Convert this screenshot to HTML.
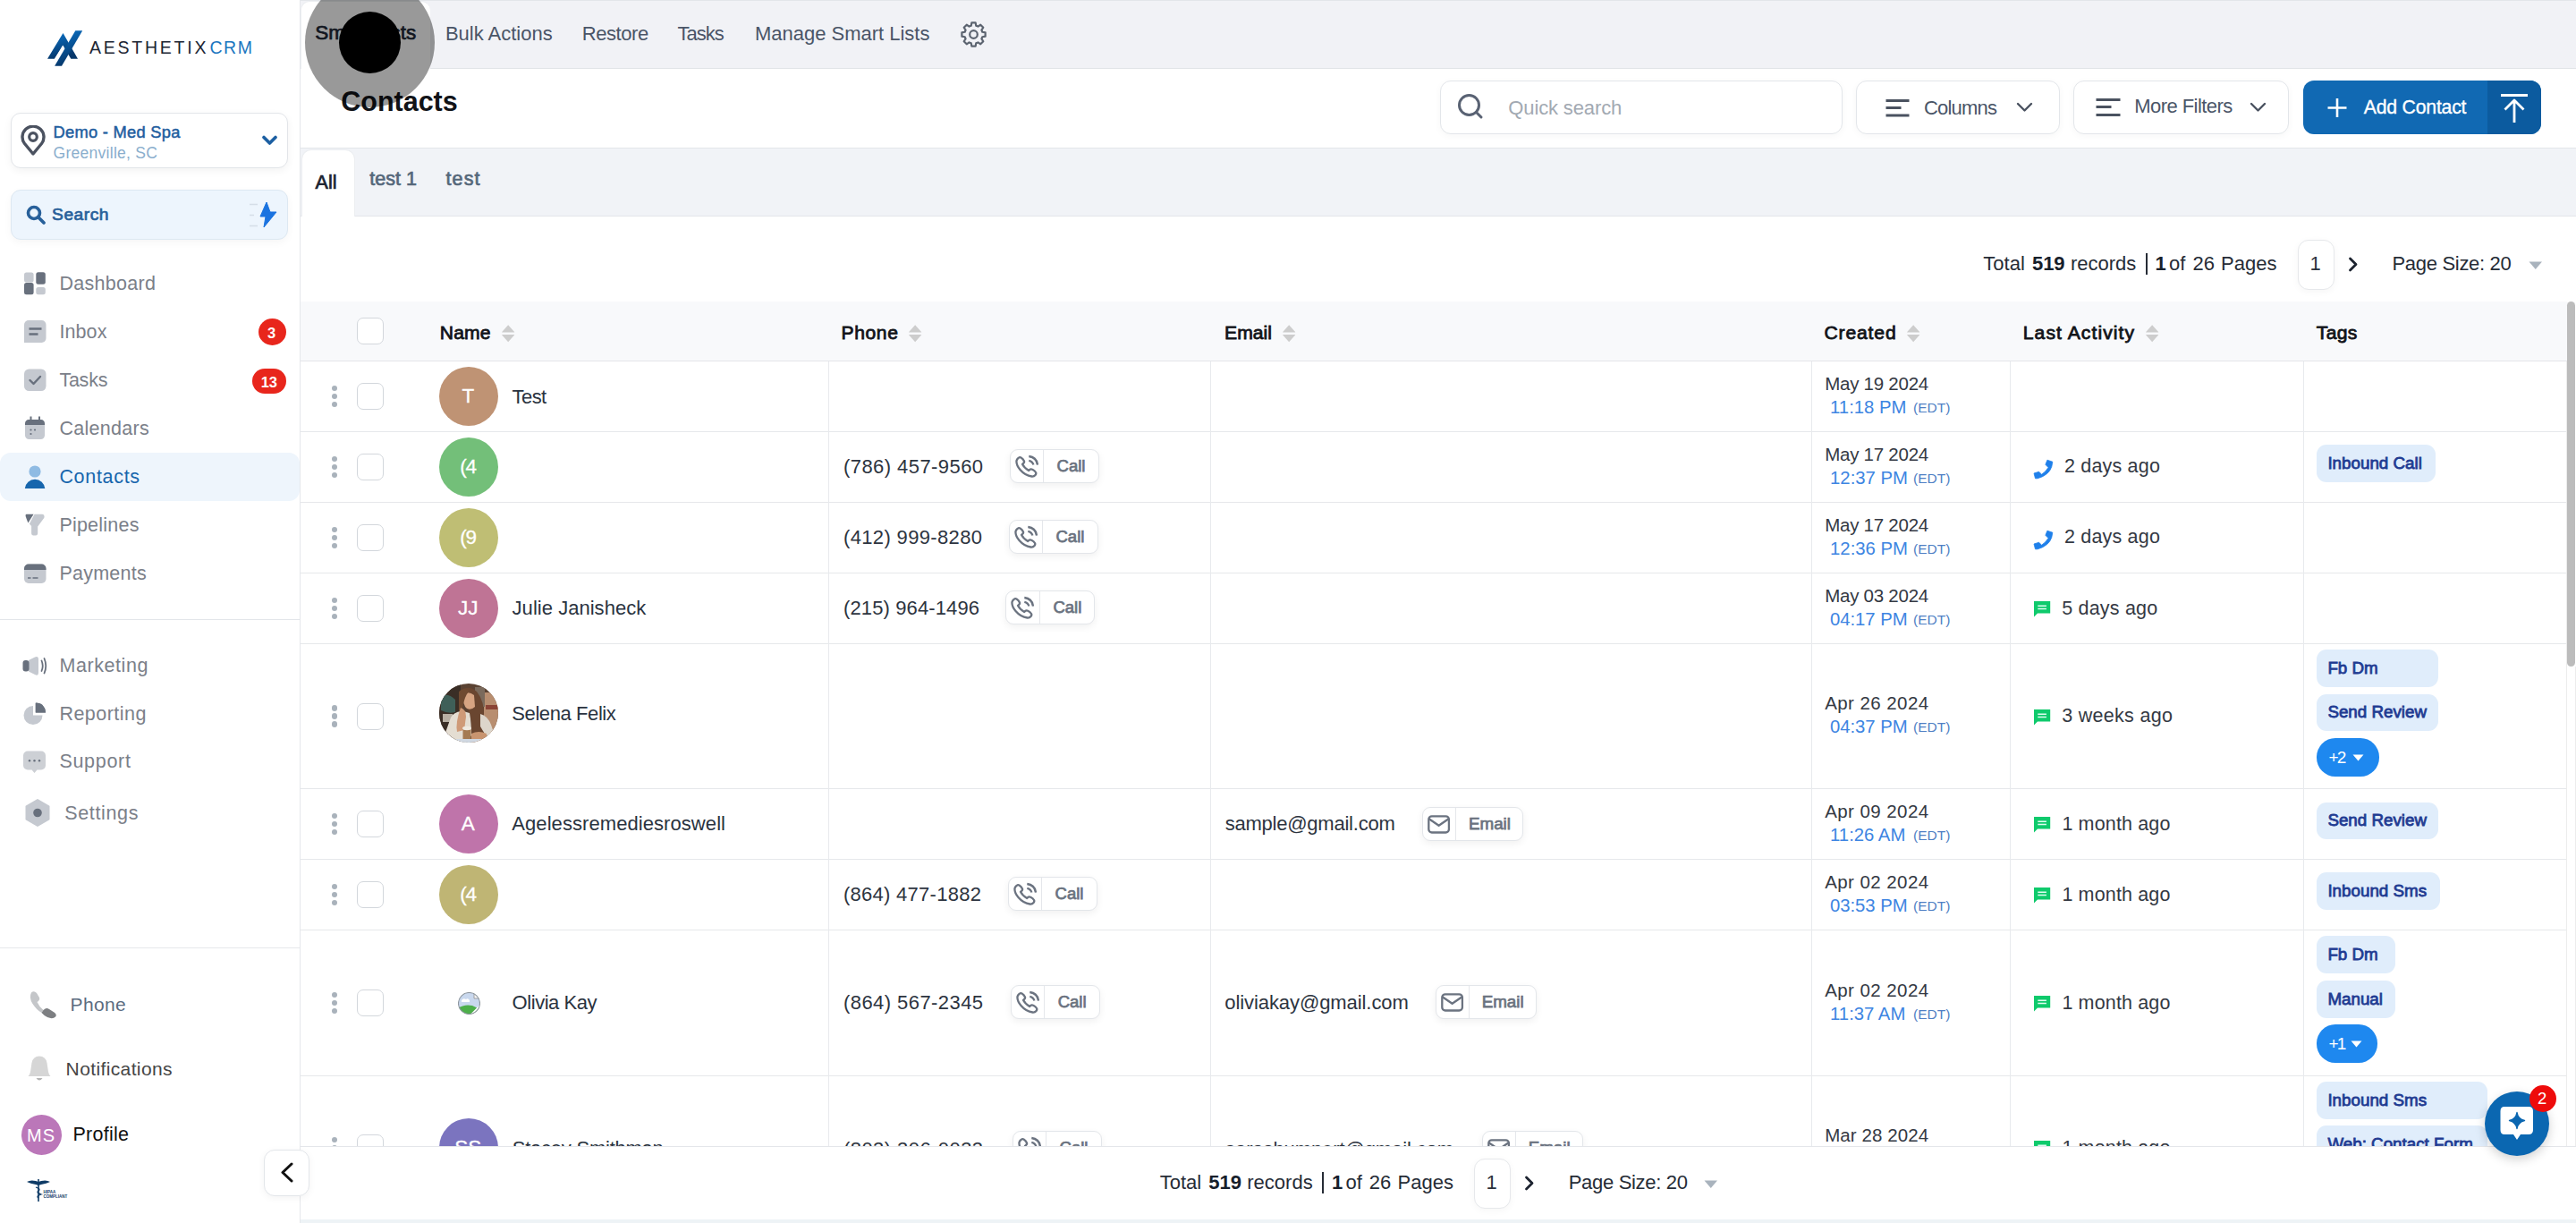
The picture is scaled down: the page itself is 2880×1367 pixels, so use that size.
<!DOCTYPE html><html><head><meta charset="utf-8"><style>
html,body{margin:0;padding:0;width:2880px;height:1367px;overflow:hidden;background:#fff;font-family:'Liberation Sans',sans-serif;}
.a{position:absolute;box-sizing:border-box;}
.t{position:absolute;line-height:0;white-space:nowrap;}
</style></head><body>

<div class="a" style="left:335.0px;top:0.0px;width:1.0px;height:1367.0px;background:#e5e7eb"></div>
<svg class="a" style="left:50.0px;top:32.0px;" width="46.0" height="45.0" viewBox="0 0 46 45"><defs><linearGradient id="lg" x1="0" y1="0" x2="0.3" y2="1"><stop offset="0" stop-color="#0a72c8"/><stop offset="1" stop-color="#06376a"/></linearGradient></defs>
<path fill="url(#lg)" fill-rule="evenodd" d="M3,33.7 L20.5,4.9 L37,33.7 L29.3,33.7 L20.6,18.9 L10.9,33.7 Z"/>
<path fill="url(#lg)" d="M34.3,2.2 L42.2,2.2 L19,41.8 L11.1,41.8 Z"/><path d="M20.6,19 L10.4,36" stroke="#fff" stroke-width="1.3"/></svg>
<div class="t" style="left:99.9px;top:52.7px;font-size:19.5px;color:#1c2533;letter-spacing:2.77px;">AESTHETIX</div>
<div class="t" style="left:234.4px;top:52.7px;font-size:19.5px;color:#1b76c0;letter-spacing:1.55px;">CRM</div>
<div class="a" style="left:12.0px;top:126.0px;width:310.0px;height:62.0px;border:1px solid #e2e5e9;border-radius:11px;background:#fff;box-shadow:0 3px 10px rgba(0,0,0,0.05)"></div>
<svg class="a" style="left:23.0px;top:140.0px;" width="28.0" height="34.0" viewBox="0 0 28 34"><path d="M14,32 L4.5,20.5 A12,12 0 1 1 23.5,20.5 Z" fill="none" stroke="#4b5260" stroke-width="3.4" stroke-linejoin="round"/><circle cx="14" cy="13" r="4.3" fill="none" stroke="#4b5260" stroke-width="3.2"/></svg>
<div class="t" style="left:59.5px;top:147.7px;font-size:18.3px;color:#1f5e9f;-webkit-text-stroke:0.50px #1f5e9f;letter-spacing:0.28px;">Demo - Med Spa</div>
<div class="t" style="left:59.5px;top:170.5px;font-size:17.5px;color:#8aaecd;letter-spacing:0.28px;">Greenville, SC</div>
<svg class="a" style="left:293.0px;top:151.0px;" width="17.0" height="12.0" viewBox="0 0 17 12"><path d="M2,2.5 L8.5,9 L15,2.5" fill="none" stroke="#1c5fa2" stroke-width="3.6" stroke-linecap="round" stroke-linejoin="round"/></svg>
<div class="a" style="left:12.0px;top:212.0px;width:310.0px;height:56.0px;border:1px solid #dde8f2;border-radius:11px;background:#edf5fd;box-shadow:0 3px 10px rgba(0,0,0,0.04)"></div>
<svg class="a" style="left:29.0px;top:229.0px;" width="23.0" height="23.0" viewBox="0 0 23 23"><circle cx="9" cy="9" r="6.5" fill="none" stroke="#28609a" stroke-width="3.6"/><path d="M14,14 L20,20" stroke="#28609a" stroke-width="3.8" stroke-linecap="round"/></svg>
<div class="t" style="left:58.1px;top:240.1px;font-size:19.2px;color:#28609a;-webkit-text-stroke:0.70px #28609a;letter-spacing:0.53px;">Search</div>
<svg class="a" style="left:278.0px;top:225.0px;" width="34.0" height="31.0" viewBox="0 0 34 31"><path d="M1,3.5h9M1,15.5h5M1,27.5h9" stroke="#d5dee8" stroke-width="1.6"/><path d="M20,1 L13,17 L19,17 L17,29 L31,12 L24,12 Z" fill="#1a73e0" stroke="#1a73e0" stroke-width="1" stroke-linejoin="round"/></svg>
<div class="a" style="left:0.0px;top:506.0px;width:335.0px;height:54.0px;background:#eef5fc;border-radius:12px"></div>
<div class="t" style="left:66.4px;top:316.6px;font-size:21.5px;color:#7b8089;letter-spacing:0.29px;">Dashboard</div>
<div class="t" style="left:66.4px;top:370.6px;font-size:21.5px;color:#7b8089;letter-spacing:0.10px;">Inbox</div>
<div class="t" style="left:66.4px;top:424.6px;font-size:21.5px;color:#7b8089;letter-spacing:-0.24px;">Tasks</div>
<div class="t" style="left:66.4px;top:478.6px;font-size:21.5px;color:#7b8089;letter-spacing:0.30px;">Calendars</div>
<div class="t" style="left:66.4px;top:532.6px;font-size:21.5px;color:#1766ad;letter-spacing:0.69px;">Contacts</div>
<div class="t" style="left:66.4px;top:586.6px;font-size:21.5px;color:#7b8089;letter-spacing:0.22px;">Pipelines</div>
<div class="t" style="left:66.4px;top:640.6px;font-size:21.5px;color:#7b8089;letter-spacing:0.24px;">Payments</div>
<svg class="a" style="left:27.0px;top:304.0px;" width="24.0" height="26.0" viewBox="0 0 24 26"><rect x="0" y="0.5" width="10.6" height="11" rx="2.5" fill="#c5c9d0"/><rect x="13.3" y="0.3" width="10.5" height="13.4" rx="2.5" fill="#68707d"/><rect x="0" y="12" width="10.6" height="13.3" rx="2.5" fill="#68707d"/><rect x="13.3" y="17" width="10.5" height="8.3" rx="2.5" fill="#c5c9d0"/></svg>
<svg class="a" style="left:27.0px;top:358.0px;" width="25.0" height="26.0" viewBox="0 0 25 26"><path d="M0,25 L0,5 A5,5 0 0 1 5,0 L19.5,0 A5,5 0 0 1 24.5,5 L24.5,20 A5,5 0 0 1 19.5,25 Z" fill="#c5c9d0"/><path d="M5.5,9.5h14M5.5,15.5h10" stroke="#68707d" stroke-width="2.4"/></svg>
<svg class="a" style="left:27.0px;top:412.0px;" width="25.0" height="26.0" viewBox="0 0 25 26"><rect x="0" y="0.5" width="24.5" height="24.5" rx="5.5" fill="#c5c9d0"/><path d="M6.5,13 L10.5,17 L18,9" fill="none" stroke="#68707d" stroke-width="2.4" stroke-linecap="round" stroke-linejoin="round"/></svg>
<svg class="a" style="left:28.0px;top:465.0px;" width="23.0" height="27.0" viewBox="0 0 23 27"><rect x="0" y="4" width="22" height="22" rx="4.5" fill="#c5c9d0"/><path d="M0,14 L0,8.5 A4.5,4.5 0 0 1 4.5,4 L17.5,4 A4.5,4.5 0 0 1 22,8.5 L22,10 L0,10 Z" fill="#68707d"/><rect x="5.5" y="0.5" width="2" height="6" fill="#68707d"/><rect x="15" y="0.5" width="2" height="6" fill="#68707d"/><circle cx="6.5" cy="15.5" r="1.1" fill="#68707d"/><circle cx="11" cy="15.5" r="1.1" fill="#68707d"/><circle cx="6.5" cy="20" r="1.1" fill="#68707d"/></svg>
<svg class="a" style="left:27.0px;top:520.0px;" width="24.0" height="27.0" viewBox="0 0 24 27"><circle cx="12" cy="7" r="6.6" fill="#8fbbe3"/><path d="M0.8,26 A11.3,11.3 0 0 1 23.3,26 Z" fill="#1766ad"/></svg>
<svg class="a" style="left:28.0px;top:574.0px;" width="23.0" height="26.0" viewBox="0 0 23 26"><path d="M1.5,0.7 L9.6,0.7 L3.4,10.5 L0.6,3 Q0.3,0.7 1.5,0.7 Z" fill="#68707d"/><path d="M10.6,0.7 L19,0.7 Q22.3,1 21.4,4.8 L14.2,14.6 L14.2,22 Q14.2,24.6 10.6,24.6 Q7.1,24.6 7.1,22 L7.1,14 L4.9,11.5 Z" fill="#c5c9d0"/></svg>
<svg class="a" style="left:27.0px;top:630.0px;" width="25.0" height="23.0" viewBox="0 0 25 23"><rect x="0" y="0.5" width="24.5" height="21.5" rx="5" fill="#c5c9d0"/><path d="M0,7 L0,5.5 A5,5 0 0 1 5,0.5 L19.5,0.5 A5,5 0 0 1 24.5,5.5 L24.5,7 Z" fill="#68707d"/><path d="M4,16h3.5M9.5,16h6" stroke="#68707d" stroke-width="1.6"/></svg>
<div class="a" style="left:0.0px;top:692.0px;width:335.0px;height:1.0px;background:#e3e6ea"></div>
<div class="t" style="left:66.4px;top:743.8px;font-size:21.5px;color:#7b8089;letter-spacing:0.58px;">Marketing</div>
<div class="t" style="left:66.4px;top:797.6px;font-size:21.5px;color:#7b8089;letter-spacing:0.47px;">Reporting</div>
<div class="t" style="left:66.4px;top:851.3px;font-size:21.5px;color:#7b8089;letter-spacing:0.70px;">Support</div>
<div class="t" style="left:72.3px;top:908.5px;font-size:21.5px;color:#7b8089;letter-spacing:0.64px;">Settings</div>
<svg class="a" style="left:25.0px;top:733.0px;" width="28.0" height="23.0" viewBox="0 0 28 23"><path d="M7,5 L14,1.5 Q18,0 18,4 L18,19 Q18,23 14,21 L7,17.5 Z" fill="#c5c9d0"/><rect x="0.5" y="5" width="7" height="12.5" rx="3" fill="#68707d"/><path d="M21.5,5.5 Q24,11.3 21.5,17M24.5,3 Q28,11.3 24.5,19.5" fill="none" stroke="#68707d" stroke-width="1.8" stroke-linecap="round"/></svg>
<svg class="a" style="left:26.0px;top:785.0px;" width="26.0" height="26.0" viewBox="0 0 26 26"><path d="M11,4 A10.5,10.5 0 1 0 21.5,14.5 L11,14.5 Z" fill="#c5c9d0"/><path d="M14,0.5 A11,11 0 0 1 25,11.5 L14,11.5 Z" fill="#68707d"/><path d="M13.6,0.8 Q24,-0.5 25,11.5 L13.6,11.5 Z" fill="#68707d"/></svg>
<svg class="a" style="left:26.0px;top:839.0px;" width="26.0" height="26.0" viewBox="0 0 26 26"><path d="M5,0.5 L20,0.5 A5,5 0 0 1 25,5.5 L25,16.5 A5,5 0 0 1 20,21.5 L15.5,21.5 L12.5,25 L9.5,21.5 L5,21.5 A5,5 0 0 1 0,16.5 L0,5.5 A5,5 0 0 1 5,0.5 Z" fill="#cdd0d5"/><circle cx="7" cy="11.3" r="1.2" fill="#68707d"/><circle cx="12.5" cy="11.3" r="1.2" fill="#68707d"/><circle cx="18" cy="11.3" r="1.2" fill="#68707d"/></svg>
<svg class="a" style="left:27.0px;top:893.0px;" width="30.0" height="32.0" viewBox="0 0 30 32"><path d="M15,1 L27.5,8.3 L27.5,22.7 L15,30 L2.5,22.7 L2.5,8.3 Z" fill="#c5c9d0" stroke="#c5c9d0" stroke-width="2" stroke-linejoin="round"/><circle cx="15" cy="15.5" r="4.8" fill="#68707d"/></svg>
<div class="a" style="left:289.0px;top:356.0px;width:31.0px;height:30.0px;background:#e8261c;border-radius:50%"></div>
<div class="t" style="left:299.0px;top:371.8px;font-size:16.5px;color:#fff;font-weight:700;">3</div>
<div class="a" style="left:282.0px;top:412.0px;width:38.0px;height:28.0px;background:#e8261c;border-radius:14px"></div>
<div class="t" style="left:291.7px;top:426.8px;font-size:16.5px;color:#fff;font-weight:700;">13</div>
<div class="a" style="left:0.0px;top:1059.0px;width:335.0px;height:1.0px;background:#e6e8eb"></div>
<svg class="a" style="left:32.0px;top:1107.0px;" width="33.0" height="32.0" viewBox="0 0 33 32"><path d="M3,2.5 Q6,0 9,3 L12,8 Q13,10.5 11,12 L9.5,13 Q12,18.5 16.5,22 L14.5,25 Q9,22 4.5,15 Q0,8 3,2.5 Z" fill="#c4c6c9"/><path d="M14.5,25 L16.5,22 L18.5,20.5 Q20.5,19.5 23,21 L28.5,24.5 Q32,27 30,29.5 Q27,32.5 21,30 Q17.5,28.5 14.5,25 Z" fill="#7d7f82"/></svg>
<div class="t" style="left:78.6px;top:1122.5px;font-size:21.0px;color:#5b6b80;letter-spacing:0.32px;">Phone</div>
<svg class="a" style="left:31.0px;top:1179.0px;" width="26.0" height="32.0" viewBox="0 0 26 32"><path d="M13,1.5 Q20,1.5 21.5,9 L23,19 Q23.5,22 25.5,24 L0.5,24 Q2.5,22 3,19 L4.5,9 Q6,1.5 13,1.5 Z" fill="#d6d6d6"/><path d="M9.5,26 Q13,31 16.5,26 Z" fill="#b3b3b3"/></svg>
<div class="t" style="left:73.6px;top:1194.6px;font-size:21.0px;color:#454545;letter-spacing:0.38px;">Notifications</div>
<div class="a" style="left:24.0px;top:1246.0px;width:45.0px;height:45.0px;background:#bb77b9;border-radius:50%"></div>
<div class="t" style="left:30.0px;top:1268.6px;font-size:20.0px;color:#fff;letter-spacing:1.00px;">MS</div>
<div class="t" style="left:81.4px;top:1267.6px;font-size:21.5px;color:#111;letter-spacing:0.29px;">Profile</div>
<svg class="a" style="left:29.0px;top:1317.0px;" width="50.0" height="27.0" viewBox="0 0 50 27"><path d="M1,4 Q5,1.5 11,3 L14,4 L17,3 Q23,1.5 27,4 Q23,6 17,7 L14,8 L11,7 Q5,6 1,4 Z" fill="#0f3b66"/><path d="M14,1 L14,26" stroke="#0f3b66" stroke-width="1.6"/><path d="M11,10 Q17,12 14,14 Q11,16 17,18 Q11,20 14,22" fill="none" stroke="#0f3b66" stroke-width="1.3"/><text x="19.5" y="16.5" font-size="4.5" font-family="Liberation Sans" font-weight="700" fill="#0f3b66">HIPAA</text><text x="19.5" y="22" font-size="4.5" font-family="Liberation Sans" font-weight="700" fill="#0f3b66">COMPLIANT</text></svg>
<div class="a" style="left:336.0px;top:0.0px;width:2544.0px;height:77.0px;background:#f1f2f6;border-top:1px solid #e3e6ea;border-bottom:1px solid #e1e4e8"></div>
<div class="a" style="left:336.0px;top:1.0px;width:145.0px;height:76.0px;background:#fff;border:1px solid #eceef1;border-bottom:none;border-right:none;border-radius:10px 10px 0 0"></div>
<div class="t" style="left:352.3px;top:37.2px;font-size:22.5px;color:#1d2736;-webkit-text-stroke:0.70px #1d2736;letter-spacing:0.05px;">Smart Lists</div>
<div class="t" style="left:497.9px;top:37.6px;font-size:22.0px;color:#4a5567;letter-spacing:-0.00px;">Bulk Actions</div>
<div class="t" style="left:650.7px;top:37.6px;font-size:22.0px;color:#4a5567;letter-spacing:-0.41px;">Restore</div>
<div class="t" style="left:757.6px;top:37.6px;font-size:22.0px;color:#4a5567;letter-spacing:-0.99px;">Tasks</div>
<div class="t" style="left:844.0px;top:37.6px;font-size:22.0px;color:#4a5567;letter-spacing:-0.01px;">Manage Smart Lists</div>
<svg class="a" style="left:1073.0px;top:23.0px;" width="31.0" height="31.0" viewBox="0 0 31 31"><path d="M25.31,12.72 L28.62,13.34 L28.62,17.66 L25.31,18.28 L24.41,20.47 L26.31,23.25 L23.25,26.31 L20.47,24.41 L18.28,25.31 L17.66,28.62 L13.34,28.62 L12.72,25.31 L10.53,24.41 L7.75,26.31 L4.69,23.25 L6.59,20.47 L5.69,18.28 L2.38,17.66 L2.38,13.34 L5.69,12.72 L6.59,10.53 L4.69,7.75 L7.75,4.69 L10.53,6.59 L12.72,5.69 L13.34,2.38 L17.66,2.38 L18.28,5.69 L20.47,6.59 L23.25,4.69 L26.31,7.75 L24.41,10.53 Z" fill="none" stroke="#5c6470" stroke-width="2.2" stroke-linejoin="round"/><circle cx="15.5" cy="15.5" r="4.3" fill="none" stroke="#5c6470" stroke-width="2.2"/></svg>
<div class="a" style="left:336.0px;top:165.0px;width:2544.0px;height:1.0px;background:#e3e6ea"></div>
<div class="t" style="left:381.3px;top:112.5px;font-size:30.5px;color:#111318;font-weight:700;letter-spacing:-0.01px;">Contacts</div>
<div class="a" style="left:1610.0px;top:90.0px;width:450.0px;height:60.0px;border:1px solid #e3e6ea;border-radius:12px;background:#fff;box-shadow:0 2px 8px rgba(0,0,0,0.035)"></div>
<svg class="a" style="left:1629.0px;top:104.0px;" width="32.0" height="32.0" viewBox="0 0 32 32"><circle cx="13.5" cy="13.5" r="11" fill="none" stroke="#596273" stroke-width="3"/><path d="M21.5,21.5 L27,27" stroke="#596273" stroke-width="3" stroke-linecap="round"/></svg>
<div class="t" style="left:1686.3px;top:120.7px;font-size:22.0px;color:#a2a9b2;letter-spacing:-0.13px;">Quick search</div>
<div class="a" style="left:2075.0px;top:90.0px;width:228.0px;height:60.0px;border:1px solid #e3e6ea;border-radius:12px;background:#fff;box-shadow:0 2px 8px rgba(0,0,0,0.035)"></div>
<svg class="a" style="left:2107.0px;top:110.0px;" width="30.0" height="22.0" viewBox="0 0 30 22"><path d="M1.5,2.5h26M1.5,10.5h17M1.5,19h26" stroke="#4a5260" stroke-width="2.8"/></svg>
<div class="t" style="left:2150.9px;top:121.2px;font-size:22.0px;color:#4a5567;letter-spacing:-0.80px;">Columns</div>
<svg class="a" style="left:2254.0px;top:114.0px;" width="19.0" height="13.0" viewBox="0 0 19 13"><path d="M2,2 L9.5,9.5 L17,2" fill="none" stroke="#4a5260" stroke-width="2.4" stroke-linecap="round" stroke-linejoin="round"/></svg>
<div class="a" style="left:2318.0px;top:90.0px;width:241.0px;height:60.0px;border:1px solid #e3e6ea;border-radius:12px;background:#fff;box-shadow:0 2px 8px rgba(0,0,0,0.035)"></div>
<svg class="a" style="left:2342.0px;top:109.0px;" width="31.0" height="23.0" viewBox="0 0 31 23"><path d="M1.5,2.5h27M1.5,10.5h17M1.5,19.5h27" stroke="#4a5260" stroke-width="2.8"/></svg>
<div class="t" style="left:2386.3px;top:119.2px;font-size:22.0px;color:#4a5567;letter-spacing:-0.56px;">More Filters</div>
<svg class="a" style="left:2515.0px;top:114.0px;" width="19.0" height="13.0" viewBox="0 0 19 13"><path d="M2,2 L9.5,9.5 L17,2" fill="none" stroke="#4a5260" stroke-width="2.4" stroke-linecap="round" stroke-linejoin="round"/></svg>
<div class="a" style="left:2575.0px;top:90.0px;width:266.0px;height:60.0px;background:#1169b3;border-radius:12px;overflow:hidden"></div>
<div class="a" style="left:2781.0px;top:90.0px;width:60.0px;height:60.0px;background:#0c5b9f;border-radius:0 12px 12px 0"></div>
<svg class="a" style="left:2601.0px;top:109.0px;" width="24.0" height="23.0" viewBox="0 0 24 23"><path d="M12,1v21M1.5,11.5h21" stroke="#fff" stroke-width="2.6"/></svg>
<div class="t" style="left:2642.8px;top:119.5px;font-size:21.2px;color:#fff;-webkit-text-stroke:0.35px #fff;letter-spacing:-0.19px;">Add Contact</div>
<svg class="a" style="left:2794.0px;top:103.0px;" width="34.0" height="34.0" viewBox="0 0 34 34"><path d="M2,3.5h30M17,9v25M6.5,19.5 L17,9 L27.5,19.5" fill="none" stroke="#fff" stroke-width="2.8" stroke-linejoin="round"/></svg>
<div class="a" style="left:336.0px;top:166.0px;width:2544.0px;height:76.0px;background:#f1f3f7;border-bottom:1px solid #e3e6ea"></div>
<div class="a" style="left:337.0px;top:167.0px;width:60.0px;height:75.0px;background:#fff;border-radius:11px 11px 0 0;border:1px solid #eceef1;border-bottom:none"></div>
<div class="t" style="left:352.4px;top:203.5px;font-size:21.5px;color:#1b2330;-webkit-text-stroke:0.70px #1b2330;letter-spacing:0.15px;">All</div>
<div class="t" style="left:413.3px;top:200.4px;font-size:21.5px;color:#55677a;-webkit-text-stroke:0.70px #55677a;letter-spacing:0.02px;">test 1</div>
<div class="t" style="left:498.4px;top:200.4px;font-size:21.5px;color:#55677a;-webkit-text-stroke:0.70px #55677a;letter-spacing:1.18px;">test</div>
<div class="t" style="left:2217.3px;top:295.2px;font-size:22.0px;color:#262c36;">Total</div>
<div class="t" style="left:2271.9px;top:295.2px;font-size:22.0px;color:#17202b;font-weight:700;">519</div>
<div class="t" style="left:2314.9px;top:295.2px;font-size:22.0px;color:#262c36;">records</div>
<div class="t" style="left:2409.5px;top:295.2px;font-size:22.0px;color:#17202b;font-weight:700;">1</div>
<div class="t" style="left:2425.0px;top:295.2px;font-size:22.0px;color:#262c36;">of</div>
<div class="t" style="left:2451.4px;top:295.2px;font-size:22.0px;color:#262c36;">26</div>
<div class="t" style="left:2483.1px;top:295.2px;font-size:22.0px;color:#262c36;">Pages</div>
<div class="a" style="left:2398.5px;top:283.2px;width:2.0px;height:24.3px;background:#262c36"></div>
<div class="a" style="left:2568.5px;top:267.5px;width:41.0px;height:56.0px;border:1px solid #e6e8eb;border-radius:12px;background:#fff;box-shadow:0 2px 8px rgba(0,0,0,0.04)"></div>
<div class="t" style="left:2582.6px;top:295.2px;font-size:22.0px;color:#2b313b;">1</div>
<svg class="a" style="left:2624.5px;top:287.3px;" width="12.0" height="18.0" viewBox="0 0 12 18"><path d="M2.5,2 L9,8.5 L2.5,15" fill="none" stroke="#1d2430" stroke-width="2.8" stroke-linecap="round" stroke-linejoin="round"/></svg>
<div class="t" style="left:2674.5px;top:295.2px;font-size:22.0px;color:#262c36;letter-spacing:-0.31px;">Page Size: 20</div>
<svg class="a" style="left:2826.5px;top:291.8px;" width="16.0" height="10.0" viewBox="0 0 16 10"><path d="M0.5,0.5 L15,0.5 L7.75,9 Z" fill="#a9b3bd"/></svg>
<div class="a" style="left:336.0px;top:337.0px;width:2534.0px;height:67.0px;background:#f8f9fb;border-bottom:1px solid #e4e6ea"></div>
<div class="a" style="left:399.0px;top:355.0px;width:30.0px;height:30.0px;border:1.5px solid #d3d7dc;border-radius:7px;background:#fff"></div>
<div class="t" style="left:491.8px;top:371.5px;font-size:21.1px;color:#111318;-webkit-text-stroke:0.80px #111318;letter-spacing:0.14px;">Name</div>
<svg class="a" style="left:559.7px;top:362.3px;" width="16.3" height="21.5" viewBox="0 0 16.3 21.5"><path d="M1.2,9 L8.15,1.3 L15.1,9 Q15.5,9.6 14.7,9.6 L1.6,9.6 Q0.8,9.6 1.2,9 Z M1.6,12 L14.7,12 Q15.5,12 15.1,12.6 L8.15,20.3 L1.2,12.6 Q0.8,12 1.6,12 Z" fill="#cdcdcd"/></svg>
<div class="t" style="left:940.5px;top:371.5px;font-size:21.1px;color:#111318;-webkit-text-stroke:0.80px #111318;letter-spacing:0.60px;">Phone</div>
<svg class="a" style="left:1014.7px;top:362.3px;" width="16.3" height="21.5" viewBox="0 0 16.3 21.5"><path d="M1.2,9 L8.15,1.3 L15.1,9 Q15.5,9.6 14.7,9.6 L1.6,9.6 Q0.8,9.6 1.2,9 Z M1.6,12 L14.7,12 Q15.5,12 15.1,12.6 L8.15,20.3 L1.2,12.6 Q0.8,12 1.6,12 Z" fill="#cdcdcd"/></svg>
<div class="t" style="left:1369.0px;top:371.5px;font-size:21.1px;color:#111318;-webkit-text-stroke:0.80px #111318;letter-spacing:0.06px;">Email</div>
<svg class="a" style="left:1433.0px;top:362.3px;" width="16.3" height="21.5" viewBox="0 0 16.3 21.5"><path d="M1.2,9 L8.15,1.3 L15.1,9 Q15.5,9.6 14.7,9.6 L1.6,9.6 Q0.8,9.6 1.2,9 Z M1.6,12 L14.7,12 Q15.5,12 15.1,12.6 L8.15,20.3 L1.2,12.6 Q0.8,12 1.6,12 Z" fill="#cdcdcd"/></svg>
<div class="t" style="left:2039.4px;top:371.5px;font-size:21.1px;color:#111318;-webkit-text-stroke:0.80px #111318;letter-spacing:0.87px;">Created</div>
<svg class="a" style="left:2130.5px;top:362.3px;" width="16.3" height="21.5" viewBox="0 0 16.3 21.5"><path d="M1.2,9 L8.15,1.3 L15.1,9 Q15.5,9.6 14.7,9.6 L1.6,9.6 Q0.8,9.6 1.2,9 Z M1.6,12 L14.7,12 Q15.5,12 15.1,12.6 L8.15,20.3 L1.2,12.6 Q0.8,12 1.6,12 Z" fill="#cdcdcd"/></svg>
<div class="t" style="left:2261.8px;top:371.5px;font-size:21.1px;color:#111318;-webkit-text-stroke:0.80px #111318;letter-spacing:1.07px;">Last Activity</div>
<svg class="a" style="left:2398.0px;top:362.3px;" width="16.3" height="21.5" viewBox="0 0 16.3 21.5"><path d="M1.2,9 L8.15,1.3 L15.1,9 Q15.5,9.6 14.7,9.6 L1.6,9.6 Q0.8,9.6 1.2,9 Z M1.6,12 L14.7,12 Q15.5,12 15.1,12.6 L8.15,20.3 L1.2,12.6 Q0.8,12 1.6,12 Z" fill="#cdcdcd"/></svg>
<div class="t" style="left:2589.8px;top:371.5px;font-size:21.1px;color:#111318;-webkit-text-stroke:0.80px #111318;letter-spacing:0.30px;">Tags</div>
<div class="a" style="left:336px;top:404px;width:2534px;height:877.5px;overflow:hidden">
<div class="a" style="left:0.0px;top:78.0px;width:2534.0px;height:1.0px;background:#e6e8eb"></div>
<div class="a" style="left:0.0px;top:157.0px;width:2534.0px;height:1.0px;background:#e6e8eb"></div>
<div class="a" style="left:0.0px;top:236.0px;width:2534.0px;height:1.0px;background:#e6e8eb"></div>
<div class="a" style="left:0.0px;top:315.0px;width:2534.0px;height:1.0px;background:#e6e8eb"></div>
<div class="a" style="left:0.0px;top:477.0px;width:2534.0px;height:1.0px;background:#e6e8eb"></div>
<div class="a" style="left:0.0px;top:556.0px;width:2534.0px;height:1.0px;background:#e6e8eb"></div>
<div class="a" style="left:0.0px;top:635.0px;width:2534.0px;height:1.0px;background:#e6e8eb"></div>
<div class="a" style="left:0.0px;top:798.0px;width:2534.0px;height:1.0px;background:#e6e8eb"></div>
<div class="a" style="left:590.0px;top:0.0px;width:1.0px;height:900.0px;background:#e8eaed"></div>
<div class="a" style="left:1017.0px;top:0.0px;width:1.0px;height:900.0px;background:#e8eaed"></div>
<div class="a" style="left:1688.5px;top:0.0px;width:1.0px;height:900.0px;background:#e8eaed"></div>
<div class="a" style="left:1910.5px;top:0.0px;width:1.0px;height:900.0px;background:#e8eaed"></div>
<div class="a" style="left:2238.5px;top:0.0px;width:1.0px;height:900.0px;background:#e8eaed"></div>
<div class="a" style="left:2533.0px;top:0.0px;width:1.0px;height:900.0px;background:#ececec"></div>
<div class="a" style="left:34.5px;top:26.8px;width:6.4px;height:6.4px;background:#a9b2bb;border-radius:50%"></div>
<div class="a" style="left:34.5px;top:35.8px;width:6.4px;height:6.4px;background:#a9b2bb;border-radius:50%"></div>
<div class="a" style="left:34.5px;top:44.8px;width:6.4px;height:6.4px;background:#a9b2bb;border-radius:50%"></div>
<div class="a" style="left:63.0px;top:24.0px;width:30.0px;height:30.0px;border:1.5px solid #d3d7dc;border-radius:7px;background:#fff"></div>
<div class="a" style="left:155.0px;top:6.0px;width:66.0px;height:66.0px;background:#bf9374;border-radius:50%"></div>
<div class="t" style="left:180.5px;top:39.0px;font-size:22.5px;color:#fff;-webkit-text-stroke:0.30px #fff;">T</div>
<div class="t" style="left:236.6px;top:39.6px;font-size:22.0px;color:#2a3340;letter-spacing:-0.60px;">Test</div>
<div class="t" style="left:1704.2px;top:24.8px;font-size:20.5px;color:#343943;letter-spacing:-0.25px;">May 19 2024</div>
<div class="t" style="left:1710.1px;top:50.7px;font-size:20.3px;color:#3d85e2;">11:18 PM</div>
<div class="t" style="left:1803.1px;top:51.9px;font-size:15.5px;color:#4f7fc4;">(EDT)</div>
<div class="a" style="left:34.5px;top:105.8px;width:6.4px;height:6.4px;background:#a9b2bb;border-radius:50%"></div>
<div class="a" style="left:34.5px;top:114.8px;width:6.4px;height:6.4px;background:#a9b2bb;border-radius:50%"></div>
<div class="a" style="left:34.5px;top:123.8px;width:6.4px;height:6.4px;background:#a9b2bb;border-radius:50%"></div>
<div class="a" style="left:63.0px;top:103.0px;width:30.0px;height:30.0px;border:1.5px solid #d3d7dc;border-radius:7px;background:#fff"></div>
<div class="a" style="left:155.0px;top:85.0px;width:66.0px;height:66.0px;background:#73bf79;border-radius:50%"></div>
<div class="t" style="left:178.2px;top:118.0px;font-size:22.5px;color:#fff;-webkit-text-stroke:0.30px #fff;letter-spacing:-1.30px;">(4</div>
<div class="t" style="left:607.0px;top:118.2px;font-size:22.0px;color:#2d3440;letter-spacing:0.43px;">(786) 457-9560</div>
<div class="a" style="left:792.6px;top:98.3px;width:100.0px;height:38.0px;border:1px solid #e3e6ea;border-radius:9px;background:#fff;box-shadow:0 3px 8px rgba(0,0,0,0.06)"></div>
<div class="a" style="left:830.1px;top:99.3px;width:1.0px;height:36.0px;background:#e5e7eb"></div>
<svg class="a" style="left:798.6px;top:104.3px;" width="26.0" height="26.0" viewBox="0 0 26 26"><path d="M3.5,4 Q5,2.7 6.5,3.5 Q9,5 10,7.5 Q10.5,9 8.8,10.2 L8,10.8 Q10,15 15.2,18 L16,17.2 Q17.5,15.8 19.2,16.8 Q22,18.3 23,20 Q23.8,21.5 22.5,23 Q21,24.8 18.5,24.5 Q11,23.5 5.5,17 Q1,11.5 1.5,7 Q1.8,5.2 3.5,4 Z" fill="none" stroke="#6b7380" stroke-width="2.3" stroke-linejoin="round"/><path d="M15.3,6.8 Q19.6,7.8 20.4,11.6M15.3,2 Q24,3.2 25,11.6" fill="none" stroke="#6b7380" stroke-width="2.3" stroke-linecap="butt"/></svg>
<div class="t" style="left:845.6px;top:117.2px;font-size:18.5px;color:#6b7380;-webkit-text-stroke:0.75px #6b7380;">Call</div>
<div class="t" style="left:1704.2px;top:103.8px;font-size:20.5px;color:#343943;letter-spacing:-0.25px;">May 17 2024</div>
<div class="t" style="left:1710.1px;top:129.7px;font-size:20.3px;color:#3d85e2;">12:37 PM</div>
<div class="t" style="left:1803.1px;top:130.9px;font-size:15.5px;color:#4f7fc4;">(EDT)</div>
<svg class="a" style="left:1934.0px;top:105.8px;" width="27.0" height="28.0" viewBox="0 0 27 28"><path d="M18.9,4.2 L24.8,6.2 L23.8,11.6 Q21,21 8,24.8 L5.5,24.8 L4,19 L9.5,17.3 L12.6,20.2 Q17.5,17 20,12.5 L16.9,9.3 Z" fill="#1f80ea" stroke="#1f80ea" stroke-width="0.8" stroke-linejoin="round"/></svg>
<div class="t" style="left:1971.9px;top:117.2px;font-size:21.5px;color:#343943;letter-spacing:0.20px;">2 days ago</div>
<div class="a" style="left:2254.0px;top:93.0px;width:133.0px;height:41.5px;background:#e0edfb;border-radius:11px"></div>
<div class="t" style="left:2266.4px;top:113.6px;font-size:18.8px;color:#1f3b92;-webkit-text-stroke:0.80px #1f3b92;">Inbound Call</div>
<div class="a" style="left:34.5px;top:184.8px;width:6.4px;height:6.4px;background:#a9b2bb;border-radius:50%"></div>
<div class="a" style="left:34.5px;top:193.8px;width:6.4px;height:6.4px;background:#a9b2bb;border-radius:50%"></div>
<div class="a" style="left:34.5px;top:202.8px;width:6.4px;height:6.4px;background:#a9b2bb;border-radius:50%"></div>
<div class="a" style="left:63.0px;top:182.0px;width:30.0px;height:30.0px;border:1.5px solid #d3d7dc;border-radius:7px;background:#fff"></div>
<div class="a" style="left:155.0px;top:164.0px;width:66.0px;height:66.0px;background:#bfbe74;border-radius:50%"></div>
<div class="t" style="left:178.2px;top:197.0px;font-size:22.5px;color:#fff;-webkit-text-stroke:0.30px #fff;letter-spacing:-1.30px;">(9</div>
<div class="t" style="left:607.0px;top:197.2px;font-size:22.0px;color:#2d3440;letter-spacing:0.35px;">(412) 999-8280</div>
<div class="a" style="left:791.5px;top:177.3px;width:100.0px;height:38.0px;border:1px solid #e3e6ea;border-radius:9px;background:#fff;box-shadow:0 3px 8px rgba(0,0,0,0.06)"></div>
<div class="a" style="left:829.0px;top:178.3px;width:1.0px;height:36.0px;background:#e5e7eb"></div>
<svg class="a" style="left:797.5px;top:183.3px;" width="26.0" height="26.0" viewBox="0 0 26 26"><path d="M3.5,4 Q5,2.7 6.5,3.5 Q9,5 10,7.5 Q10.5,9 8.8,10.2 L8,10.8 Q10,15 15.2,18 L16,17.2 Q17.5,15.8 19.2,16.8 Q22,18.3 23,20 Q23.8,21.5 22.5,23 Q21,24.8 18.5,24.5 Q11,23.5 5.5,17 Q1,11.5 1.5,7 Q1.8,5.2 3.5,4 Z" fill="none" stroke="#6b7380" stroke-width="2.3" stroke-linejoin="round"/><path d="M15.3,6.8 Q19.6,7.8 20.4,11.6M15.3,2 Q24,3.2 25,11.6" fill="none" stroke="#6b7380" stroke-width="2.3" stroke-linecap="butt"/></svg>
<div class="t" style="left:844.5px;top:196.2px;font-size:18.5px;color:#6b7380;-webkit-text-stroke:0.75px #6b7380;">Call</div>
<div class="t" style="left:1704.2px;top:182.8px;font-size:20.5px;color:#343943;letter-spacing:-0.25px;">May 17 2024</div>
<div class="t" style="left:1710.1px;top:208.7px;font-size:20.3px;color:#3d85e2;">12:36 PM</div>
<div class="t" style="left:1803.1px;top:209.9px;font-size:15.5px;color:#4f7fc4;">(EDT)</div>
<svg class="a" style="left:1934.0px;top:184.8px;" width="27.0" height="28.0" viewBox="0 0 27 28"><path d="M18.9,4.2 L24.8,6.2 L23.8,11.6 Q21,21 8,24.8 L5.5,24.8 L4,19 L9.5,17.3 L12.6,20.2 Q17.5,17 20,12.5 L16.9,9.3 Z" fill="#1f80ea" stroke="#1f80ea" stroke-width="0.8" stroke-linejoin="round"/></svg>
<div class="t" style="left:1971.9px;top:196.2px;font-size:21.5px;color:#343943;letter-spacing:0.20px;">2 days ago</div>
<div class="a" style="left:34.5px;top:263.8px;width:6.4px;height:6.4px;background:#a9b2bb;border-radius:50%"></div>
<div class="a" style="left:34.5px;top:272.8px;width:6.4px;height:6.4px;background:#a9b2bb;border-radius:50%"></div>
<div class="a" style="left:34.5px;top:281.8px;width:6.4px;height:6.4px;background:#a9b2bb;border-radius:50%"></div>
<div class="a" style="left:63.0px;top:261.0px;width:30.0px;height:30.0px;border:1.5px solid #d3d7dc;border-radius:7px;background:#fff"></div>
<div class="a" style="left:155.0px;top:243.0px;width:66.0px;height:66.0px;background:#bf7495;border-radius:50%"></div>
<div class="t" style="left:176.1px;top:276.0px;font-size:22.5px;color:#fff;-webkit-text-stroke:0.30px #fff;">JJ</div>
<div class="t" style="left:236.6px;top:276.2px;font-size:22.0px;color:#2a3340;letter-spacing:0.03px;">Julie Janisheck</div>
<div class="t" style="left:607.0px;top:276.2px;font-size:22.0px;color:#2d3440;letter-spacing:0.12px;">(215) 964-1496</div>
<div class="a" style="left:788.4px;top:256.3px;width:100.0px;height:38.0px;border:1px solid #e3e6ea;border-radius:9px;background:#fff;box-shadow:0 3px 8px rgba(0,0,0,0.06)"></div>
<div class="a" style="left:825.9px;top:257.3px;width:1.0px;height:36.0px;background:#e5e7eb"></div>
<svg class="a" style="left:794.4px;top:262.3px;" width="26.0" height="26.0" viewBox="0 0 26 26"><path d="M3.5,4 Q5,2.7 6.5,3.5 Q9,5 10,7.5 Q10.5,9 8.8,10.2 L8,10.8 Q10,15 15.2,18 L16,17.2 Q17.5,15.8 19.2,16.8 Q22,18.3 23,20 Q23.8,21.5 22.5,23 Q21,24.8 18.5,24.5 Q11,23.5 5.5,17 Q1,11.5 1.5,7 Q1.8,5.2 3.5,4 Z" fill="none" stroke="#6b7380" stroke-width="2.3" stroke-linejoin="round"/><path d="M15.3,6.8 Q19.6,7.8 20.4,11.6M15.3,2 Q24,3.2 25,11.6" fill="none" stroke="#6b7380" stroke-width="2.3" stroke-linecap="butt"/></svg>
<div class="t" style="left:841.4px;top:275.2px;font-size:18.5px;color:#6b7380;-webkit-text-stroke:0.75px #6b7380;">Call</div>
<div class="t" style="left:1704.2px;top:261.8px;font-size:20.5px;color:#343943;letter-spacing:-0.25px;">May 03 2024</div>
<div class="t" style="left:1709.9px;top:287.7px;font-size:20.3px;color:#3d85e2;">04:17 PM</div>
<div class="t" style="left:1803.1px;top:288.9px;font-size:15.5px;color:#4f7fc4;">(EDT)</div>
<svg class="a" style="left:1938.2px;top:268.3px;" width="19.0" height="18.0" viewBox="0 0 19 18"><path d="M0,0 L18.2,0 L18.2,13.4 L4,13.4 L0,17.6 Z" fill="#0fca6c"/><path d="M4.3,5.3h9.6M4.3,8.6h9.6" stroke="#dffdf0" stroke-width="1.5"/></svg>
<div class="t" style="left:1969.2px;top:275.8px;font-size:21.5px;color:#343943;letter-spacing:0.20px;">5 days ago</div>
<div class="a" style="left:34.5px;top:384.3px;width:6.4px;height:6.4px;background:#a9b2bb;border-radius:50%"></div>
<div class="a" style="left:34.5px;top:393.3px;width:6.4px;height:6.4px;background:#a9b2bb;border-radius:50%"></div>
<div class="a" style="left:34.5px;top:402.3px;width:6.4px;height:6.4px;background:#a9b2bb;border-radius:50%"></div>
<div class="a" style="left:63.0px;top:381.5px;width:30.0px;height:30.0px;border:1.5px solid #d3d7dc;border-radius:7px;background:#fff"></div>
<svg class="a" style="left:155.0px;top:360.0px;" width="66.0" height="66.0" viewBox="0 0 66 66"><defs><clipPath id="cp"><circle cx="33" cy="33" r="33"/></clipPath></defs><g clip-path="url(#cp)">
<rect width="66" height="66" fill="#5a4232"/>
<rect x="0" y="0" width="24" height="66" fill="#3a2e26"/>
<path d="M2,14 Q10,10 18,18 L18,32 Q10,34 2,30 Z" fill="#3f5f58"/>
<rect x="4" y="34" width="11" height="9" fill="#b8b0a4"/>
<rect x="50" y="10" width="16" height="46" fill="#b88e70"/>
<rect x="52" y="24" width="14" height="5" fill="#8a4436"/>
<rect x="40" y="4" width="11" height="22" fill="#7a6a5c"/>
<path d="M23,8 Q33,1 42,9 Q51,20 50,38 Q52,54 46,60 L35,60 Q37,40 33,30 Z" fill="#6a4630"/>
<path d="M27,12 Q33,8 39,13 L40,26 Q36,30 31,28 Q26,24 27,12 Z" fill="#d6a482"/>
<path d="M22,9 Q28,4 34,8 Q28,14 26,28 L22,31 Z" fill="#6f4a30"/>
<path d="M13,38 Q18,30 27,31 L34,33 Q36,44 36,58 L30,66 L2,66 L8,52 Z" fill="#e4ddd2"/>
<path d="M46,34 Q54,36 58,46 L62,58 L52,58 L46,48 Z" fill="#ddd6cb"/>
<path d="M24,27 Q30,29 30,37 L28,52 L20,54 Q18,44 24,27 Z" fill="#cf9a78"/>
<rect x="26.5" y="49" width="9" height="15" rx="1" fill="#a47a52"/>
<ellipse cx="31" cy="50" rx="5" ry="2.2" fill="#efe9e0"/>
<path d="M36,56 Q44,52 53,56 L53,66 L36,66 Z" fill="#c8946f"/>
<rect x="18" y="62" width="32" height="4" fill="#d0d8e2"/>
</g></svg>
<div class="t" style="left:236.3px;top:394.4px;font-size:22.0px;color:#2a3340;letter-spacing:-0.41px;">Selena Felix</div>
<div class="t" style="left:1704.2px;top:382.3px;font-size:20.5px;color:#343943;letter-spacing:0.43px;">Apr 26 2024</div>
<div class="t" style="left:1709.9px;top:408.2px;font-size:20.3px;color:#3d85e2;">04:37 PM</div>
<div class="t" style="left:1803.1px;top:409.4px;font-size:15.5px;color:#4f7fc4;">(EDT)</div>
<svg class="a" style="left:1938.2px;top:388.8px;" width="19.0" height="18.0" viewBox="0 0 19 18"><path d="M0,0 L18.2,0 L18.2,13.4 L4,13.4 L0,17.6 Z" fill="#0fca6c"/><path d="M4.3,5.3h9.6M4.3,8.6h9.6" stroke="#dffdf0" stroke-width="1.5"/></svg>
<div class="t" style="left:1969.2px;top:396.3px;font-size:21.5px;color:#343943;letter-spacing:0.30px;">3 weeks ago</div>
<div class="a" style="left:2254.0px;top:322.3px;width:136.0px;height:41.5px;background:#e0edfb;border-radius:11px"></div>
<div class="t" style="left:2266.4px;top:342.9px;font-size:18.8px;color:#1f3b92;-webkit-text-stroke:0.80px #1f3b92;">Fb Dm</div>
<div class="a" style="left:2254.0px;top:371.5px;width:136.0px;height:41.5px;background:#e0edfb;border-radius:11px"></div>
<div class="t" style="left:2266.4px;top:392.1px;font-size:18.8px;color:#1f3b92;-webkit-text-stroke:0.80px #1f3b92;">Send Review</div>
<div class="a" style="left:2254.0px;top:421.3px;width:70.0px;height:42.5px;background:#1e88ef;border-radius:21px"></div>
<div class="t" style="left:2267.4px;top:443.2px;font-size:19.0px;color:#fff;letter-spacing:-1.66px;">+2</div>
<svg class="a" style="left:2294.0px;top:439.3px;" width="13.0" height="8.0" viewBox="0 0 13 8"><path d="M0.5,0.5 L12.5,0.5 L6.5,7.5 Z" fill="#fff"/></svg>
<div class="a" style="left:34.5px;top:504.8px;width:6.4px;height:6.4px;background:#a9b2bb;border-radius:50%"></div>
<div class="a" style="left:34.5px;top:513.8px;width:6.4px;height:6.4px;background:#a9b2bb;border-radius:50%"></div>
<div class="a" style="left:34.5px;top:522.8px;width:6.4px;height:6.4px;background:#a9b2bb;border-radius:50%"></div>
<div class="a" style="left:63.0px;top:502.0px;width:30.0px;height:30.0px;border:1.5px solid #d3d7dc;border-radius:7px;background:#fff"></div>
<div class="a" style="left:155.0px;top:484.0px;width:66.0px;height:66.0px;background:#bf74aa;border-radius:50%"></div>
<div class="t" style="left:179.8px;top:517.0px;font-size:22.5px;color:#fff;-webkit-text-stroke:0.30px #fff;">A</div>
<div class="t" style="left:236.3px;top:517.2px;font-size:22.0px;color:#2a3340;letter-spacing:0.07px;">Agelessremediesroswell</div>
<div class="t" style="left:1033.7px;top:517.2px;font-size:22.0px;color:#2d3440;letter-spacing:-0.23px;">sample@gmail.com</div>
<div class="a" style="left:1253.8px;top:498.3px;width:113.0px;height:38.0px;border:1px solid #e3e6ea;border-radius:9px;background:#fff;box-shadow:0 3px 8px rgba(0,0,0,0.06)"></div>
<div class="a" style="left:1291.3px;top:499.3px;width:1.0px;height:36.0px;background:#e5e7eb"></div>
<svg class="a" style="left:1259.8px;top:507.3px;" width="26.0" height="21.0" viewBox="0 0 26 21"><rect x="1.3" y="1.3" width="22.6" height="18.2" rx="3.5" fill="none" stroke="#6b7380" stroke-width="2.3"/><path d="M2,4.5 L12.6,11.8 L23.2,4.5" fill="none" stroke="#6b7380" stroke-width="2.3" stroke-linejoin="round"/></svg>
<div class="t" style="left:1306.0px;top:517.1px;font-size:18.8px;color:#6b7380;-webkit-text-stroke:0.75px #6b7380;">Email</div>
<div class="t" style="left:1704.2px;top:502.8px;font-size:20.5px;color:#343943;letter-spacing:0.43px;">Apr 09 2024</div>
<div class="t" style="left:1710.1px;top:528.7px;font-size:20.3px;color:#3d85e2;">11:26 AM</div>
<div class="t" style="left:1803.1px;top:529.9px;font-size:15.5px;color:#4f7fc4;">(EDT)</div>
<svg class="a" style="left:1938.2px;top:509.3px;" width="19.0" height="18.0" viewBox="0 0 19 18"><path d="M0,0 L18.2,0 L18.2,13.4 L4,13.4 L0,17.6 Z" fill="#0fca6c"/><path d="M4.3,5.3h9.6M4.3,8.6h9.6" stroke="#dffdf0" stroke-width="1.5"/></svg>
<div class="t" style="left:1969.4px;top:516.8px;font-size:21.5px;color:#343943;letter-spacing:0.15px;">1 month ago</div>
<div class="a" style="left:2254.0px;top:492.6px;width:136.0px;height:41.5px;background:#e0edfb;border-radius:11px"></div>
<div class="t" style="left:2266.4px;top:513.2px;font-size:18.8px;color:#1f3b92;-webkit-text-stroke:0.80px #1f3b92;">Send Review</div>
<div class="a" style="left:34.5px;top:583.8px;width:6.4px;height:6.4px;background:#a9b2bb;border-radius:50%"></div>
<div class="a" style="left:34.5px;top:592.8px;width:6.4px;height:6.4px;background:#a9b2bb;border-radius:50%"></div>
<div class="a" style="left:34.5px;top:601.8px;width:6.4px;height:6.4px;background:#a9b2bb;border-radius:50%"></div>
<div class="a" style="left:63.0px;top:581.0px;width:30.0px;height:30.0px;border:1.5px solid #d3d7dc;border-radius:7px;background:#fff"></div>
<div class="a" style="left:155.0px;top:563.0px;width:66.0px;height:66.0px;background:#bfb574;border-radius:50%"></div>
<div class="t" style="left:178.2px;top:596.0px;font-size:22.5px;color:#fff;-webkit-text-stroke:0.30px #fff;letter-spacing:-1.30px;">(4</div>
<div class="t" style="left:607.0px;top:596.2px;font-size:22.0px;color:#2d3440;letter-spacing:0.27px;">(864) 477-1882</div>
<div class="a" style="left:790.6px;top:576.3px;width:100.0px;height:38.0px;border:1px solid #e3e6ea;border-radius:9px;background:#fff;box-shadow:0 3px 8px rgba(0,0,0,0.06)"></div>
<div class="a" style="left:828.1px;top:577.3px;width:1.0px;height:36.0px;background:#e5e7eb"></div>
<svg class="a" style="left:796.6px;top:582.3px;" width="26.0" height="26.0" viewBox="0 0 26 26"><path d="M3.5,4 Q5,2.7 6.5,3.5 Q9,5 10,7.5 Q10.5,9 8.8,10.2 L8,10.8 Q10,15 15.2,18 L16,17.2 Q17.5,15.8 19.2,16.8 Q22,18.3 23,20 Q23.8,21.5 22.5,23 Q21,24.8 18.5,24.5 Q11,23.5 5.5,17 Q1,11.5 1.5,7 Q1.8,5.2 3.5,4 Z" fill="none" stroke="#6b7380" stroke-width="2.3" stroke-linejoin="round"/><path d="M15.3,6.8 Q19.6,7.8 20.4,11.6M15.3,2 Q24,3.2 25,11.6" fill="none" stroke="#6b7380" stroke-width="2.3" stroke-linecap="butt"/></svg>
<div class="t" style="left:843.6px;top:595.2px;font-size:18.5px;color:#6b7380;-webkit-text-stroke:0.75px #6b7380;">Call</div>
<div class="t" style="left:1704.2px;top:581.8px;font-size:20.5px;color:#343943;letter-spacing:0.43px;">Apr 02 2024</div>
<div class="t" style="left:1709.9px;top:607.7px;font-size:20.3px;color:#3d85e2;">03:53 PM</div>
<div class="t" style="left:1803.1px;top:608.9px;font-size:15.5px;color:#4f7fc4;">(EDT)</div>
<svg class="a" style="left:1938.2px;top:588.3px;" width="19.0" height="18.0" viewBox="0 0 19 18"><path d="M0,0 L18.2,0 L18.2,13.4 L4,13.4 L0,17.6 Z" fill="#0fca6c"/><path d="M4.3,5.3h9.6M4.3,8.6h9.6" stroke="#dffdf0" stroke-width="1.5"/></svg>
<div class="t" style="left:1969.4px;top:595.8px;font-size:21.5px;color:#343943;letter-spacing:0.15px;">1 month ago</div>
<div class="a" style="left:2254.0px;top:571.4px;width:138.0px;height:41.5px;background:#e0edfb;border-radius:11px"></div>
<div class="t" style="left:2266.4px;top:592.0px;font-size:18.8px;color:#1f3b92;-webkit-text-stroke:0.80px #1f3b92;">Inbound Sms</div>
<div class="a" style="left:34.5px;top:704.8px;width:6.4px;height:6.4px;background:#a9b2bb;border-radius:50%"></div>
<div class="a" style="left:34.5px;top:713.8px;width:6.4px;height:6.4px;background:#a9b2bb;border-radius:50%"></div>
<div class="a" style="left:34.5px;top:722.8px;width:6.4px;height:6.4px;background:#a9b2bb;border-radius:50%"></div>
<div class="a" style="left:63.0px;top:702.0px;width:30.0px;height:30.0px;border:1.5px solid #d3d7dc;border-radius:7px;background:#fff"></div>
<svg class="a" style="left:175.5px;top:704.5px;" width="25.0" height="25.0" viewBox="0 0 25 25"><defs><clipPath id="cp2"><circle cx="12.5" cy="12.5" r="12"/></clipPath></defs><g clip-path="url(#cp2)"><rect width="25" height="25" fill="#c9d8ee"/><path d="M-1,19 Q6,13 16,15 Q22,17 26,22 L26,26 L-1,26 Z" fill="#4daf4a"/><path d="M4,9 Q6,6 9,8 Q11,6 13,9 L13,11 L4,11 Z" fill="#fff"/><path d="M18,-1 L26,7 L18,7 Z" fill="#f4f4f4"/><path d="M18,0 L18,7 L25,7" fill="none" stroke="#9a9a9a" stroke-width="0.9"/><path d="M15,25 L25,15" stroke="#fff" stroke-width="2"/></g><circle cx="12.5" cy="12.5" r="12" fill="none" stroke="#8e969e" stroke-width="1.1"/></svg>
<div class="t" style="left:236.6px;top:717.0px;font-size:22.0px;color:#2a3340;letter-spacing:-0.45px;">Olivia Kay</div>
<div class="t" style="left:607.0px;top:717.2px;font-size:22.0px;color:#2d3440;letter-spacing:0.43px;">(864) 567-2345</div>
<div class="a" style="left:793.7px;top:697.3px;width:100.0px;height:38.0px;border:1px solid #e3e6ea;border-radius:9px;background:#fff;box-shadow:0 3px 8px rgba(0,0,0,0.06)"></div>
<div class="a" style="left:831.2px;top:698.3px;width:1.0px;height:36.0px;background:#e5e7eb"></div>
<svg class="a" style="left:799.7px;top:703.3px;" width="26.0" height="26.0" viewBox="0 0 26 26"><path d="M3.5,4 Q5,2.7 6.5,3.5 Q9,5 10,7.5 Q10.5,9 8.8,10.2 L8,10.8 Q10,15 15.2,18 L16,17.2 Q17.5,15.8 19.2,16.8 Q22,18.3 23,20 Q23.8,21.5 22.5,23 Q21,24.8 18.5,24.5 Q11,23.5 5.5,17 Q1,11.5 1.5,7 Q1.8,5.2 3.5,4 Z" fill="none" stroke="#6b7380" stroke-width="2.3" stroke-linejoin="round"/><path d="M15.3,6.8 Q19.6,7.8 20.4,11.6M15.3,2 Q24,3.2 25,11.6" fill="none" stroke="#6b7380" stroke-width="2.3" stroke-linecap="butt"/></svg>
<div class="t" style="left:846.7px;top:716.2px;font-size:18.5px;color:#6b7380;-webkit-text-stroke:0.75px #6b7380;">Call</div>
<div class="t" style="left:1033.3px;top:717.2px;font-size:22.0px;color:#2d3440;letter-spacing:-0.08px;">oliviakay@gmail.com</div>
<div class="a" style="left:1268.5px;top:697.3px;width:113.0px;height:38.0px;border:1px solid #e3e6ea;border-radius:9px;background:#fff;box-shadow:0 3px 8px rgba(0,0,0,0.06)"></div>
<div class="a" style="left:1306.0px;top:698.3px;width:1.0px;height:36.0px;background:#e5e7eb"></div>
<svg class="a" style="left:1274.5px;top:706.3px;" width="26.0" height="21.0" viewBox="0 0 26 21"><rect x="1.3" y="1.3" width="22.6" height="18.2" rx="3.5" fill="none" stroke="#6b7380" stroke-width="2.3"/><path d="M2,4.5 L12.6,11.8 L23.2,4.5" fill="none" stroke="#6b7380" stroke-width="2.3" stroke-linejoin="round"/></svg>
<div class="t" style="left:1320.7px;top:716.1px;font-size:18.8px;color:#6b7380;-webkit-text-stroke:0.75px #6b7380;">Email</div>
<div class="t" style="left:1704.2px;top:702.8px;font-size:20.5px;color:#343943;letter-spacing:0.43px;">Apr 02 2024</div>
<div class="t" style="left:1710.1px;top:728.7px;font-size:20.3px;color:#3d85e2;">11:37 AM</div>
<div class="t" style="left:1803.1px;top:729.9px;font-size:15.5px;color:#4f7fc4;">(EDT)</div>
<svg class="a" style="left:1938.2px;top:709.3px;" width="19.0" height="18.0" viewBox="0 0 19 18"><path d="M0,0 L18.2,0 L18.2,13.4 L4,13.4 L0,17.6 Z" fill="#0fca6c"/><path d="M4.3,5.3h9.6M4.3,8.6h9.6" stroke="#dffdf0" stroke-width="1.5"/></svg>
<div class="t" style="left:1969.4px;top:716.8px;font-size:21.5px;color:#343943;letter-spacing:0.15px;">1 month ago</div>
<div class="a" style="left:2254.0px;top:642.2px;width:88.0px;height:41.5px;background:#e0edfb;border-radius:11px"></div>
<div class="t" style="left:2266.4px;top:662.8px;font-size:18.8px;color:#1f3b92;-webkit-text-stroke:0.80px #1f3b92;">Fb Dm</div>
<div class="a" style="left:2254.0px;top:692.3px;width:88.0px;height:41.5px;background:#e0edfb;border-radius:11px"></div>
<div class="t" style="left:2266.4px;top:712.9px;font-size:18.8px;color:#1f3b92;-webkit-text-stroke:0.80px #1f3b92;">Manual</div>
<div class="a" style="left:2254.0px;top:741.0px;width:68.0px;height:42.5px;background:#1e88ef;border-radius:21px"></div>
<div class="t" style="left:2267.4px;top:762.9px;font-size:19.0px;color:#fff;letter-spacing:-1.66px;">+1</div>
<svg class="a" style="left:2292.0px;top:759.0px;" width="13.0" height="8.0" viewBox="0 0 13 8"><path d="M0.5,0.5 L12.5,0.5 L6.5,7.5 Z" fill="#fff"/></svg>
<div class="a" style="left:34.5px;top:866.8px;width:6.4px;height:6.4px;background:#a9b2bb;border-radius:50%"></div>
<div class="a" style="left:34.5px;top:875.8px;width:6.4px;height:6.4px;background:#a9b2bb;border-radius:50%"></div>
<div class="a" style="left:34.5px;top:884.8px;width:6.4px;height:6.4px;background:#a9b2bb;border-radius:50%"></div>
<div class="a" style="left:63.0px;top:864.0px;width:30.0px;height:30.0px;border:1.5px solid #d3d7dc;border-radius:7px;background:#fff"></div>
<div class="a" style="left:155.0px;top:846.0px;width:66.0px;height:66.0px;background:#7b74bf;border-radius:50%"></div>
<div class="t" style="left:172.3px;top:879.0px;font-size:22.5px;color:#fff;-webkit-text-stroke:0.30px #fff;">SS</div>
<div class="t" style="left:236.8px;top:880.1px;font-size:22.0px;color:#2a3340;letter-spacing:-0.24px;">Stacey Smithman</div>
<div class="t" style="left:607.0px;top:880.6px;font-size:22.0px;color:#2d3440;letter-spacing:0.43px;">(803) 306-0033</div>
<div class="a" style="left:795.6px;top:860.3px;width:100.0px;height:38.0px;border:1px solid #e3e6ea;border-radius:9px;background:#fff;box-shadow:0 3px 8px rgba(0,0,0,0.06)"></div>
<div class="a" style="left:833.1px;top:861.3px;width:1.0px;height:36.0px;background:#e5e7eb"></div>
<svg class="a" style="left:801.6px;top:866.3px;" width="26.0" height="26.0" viewBox="0 0 26 26"><path d="M3.5,4 Q5,2.7 6.5,3.5 Q9,5 10,7.5 Q10.5,9 8.8,10.2 L8,10.8 Q10,15 15.2,18 L16,17.2 Q17.5,15.8 19.2,16.8 Q22,18.3 23,20 Q23.8,21.5 22.5,23 Q21,24.8 18.5,24.5 Q11,23.5 5.5,17 Q1,11.5 1.5,7 Q1.8,5.2 3.5,4 Z" fill="none" stroke="#6b7380" stroke-width="2.3" stroke-linejoin="round"/><path d="M15.3,6.8 Q19.6,7.8 20.4,11.6M15.3,2 Q24,3.2 25,11.6" fill="none" stroke="#6b7380" stroke-width="2.3" stroke-linecap="butt"/></svg>
<div class="t" style="left:848.6px;top:879.2px;font-size:18.5px;color:#6b7380;-webkit-text-stroke:0.75px #6b7380;">Call</div>
<div class="t" style="left:1034.1px;top:880.6px;font-size:22.0px;color:#2d3440;letter-spacing:-0.10px;">sarashumpert@gmail.com</div>
<div class="a" style="left:1320.5px;top:860.3px;width:113.0px;height:38.0px;border:1px solid #e3e6ea;border-radius:9px;background:#fff;box-shadow:0 3px 8px rgba(0,0,0,0.06)"></div>
<div class="a" style="left:1358.0px;top:861.3px;width:1.0px;height:36.0px;background:#e5e7eb"></div>
<svg class="a" style="left:1326.5px;top:869.3px;" width="26.0" height="21.0" viewBox="0 0 26 21"><rect x="1.3" y="1.3" width="22.6" height="18.2" rx="3.5" fill="none" stroke="#6b7380" stroke-width="2.3"/><path d="M2,4.5 L12.6,11.8 L23.2,4.5" fill="none" stroke="#6b7380" stroke-width="2.3" stroke-linejoin="round"/></svg>
<div class="t" style="left:1372.7px;top:879.1px;font-size:18.8px;color:#6b7380;-webkit-text-stroke:0.75px #6b7380;">Email</div>
<div class="t" style="left:1704.2px;top:864.8px;font-size:20.5px;color:#343943;letter-spacing:0.09px;">Mar 28 2024</div>
<div class="t" style="left:1710.1px;top:890.7px;font-size:20.3px;color:#3d85e2;">11:02 AM</div>
<div class="t" style="left:1803.1px;top:891.9px;font-size:15.5px;color:#4f7fc4;">(EDT)</div>
<svg class="a" style="left:1938.2px;top:871.3px;" width="19.0" height="18.0" viewBox="0 0 19 18"><path d="M0,0 L18.2,0 L18.2,13.4 L4,13.4 L0,17.6 Z" fill="#0fca6c"/><path d="M4.3,5.3h9.6M4.3,8.6h9.6" stroke="#dffdf0" stroke-width="1.5"/></svg>
<div class="t" style="left:1969.4px;top:878.8px;font-size:21.5px;color:#343943;letter-spacing:0.15px;">1 month ago</div>
<div class="a" style="left:2254.0px;top:805.0px;width:191.0px;height:41.5px;background:#e0edfb;border-radius:11px"></div>
<div class="t" style="left:2266.4px;top:825.6px;font-size:18.8px;color:#1f3b92;-webkit-text-stroke:0.80px #1f3b92;">Inbound Sms</div>
<div class="a" style="left:2254.0px;top:854.0px;width:191.0px;height:41.5px;background:#e0edfb;border-radius:11px"></div>
<div class="t" style="left:2266.4px;top:874.6px;font-size:18.8px;color:#1f3b92;-webkit-text-stroke:0.80px #1f3b92;">Web: Contact Form</div>
</div>
<div class="a" style="left:2869.5px;top:337.0px;width:9.5px;height:408.0px;background:#bcbcbc;border-radius:5px"></div>
<div class="a" style="left:2879.0px;top:745.0px;width:1.0px;height:536.0px;background:#ececec"></div>
<div class="a" style="left:336.0px;top:1281.0px;width:2544.0px;height:86.0px;background:#fff;border-top:1px solid #e4e6ea"></div>
<div class="a" style="left:336.0px;top:1363.0px;width:2544.0px;height:4.0px;background:#eef3f6"></div>
<div class="t" style="left:1296.7px;top:1322.2px;font-size:22.0px;color:#262c36;">Total</div>
<div class="t" style="left:1351.3px;top:1322.2px;font-size:22.0px;color:#17202b;font-weight:700;">519</div>
<div class="t" style="left:1394.3px;top:1322.2px;font-size:22.0px;color:#262c36;">records</div>
<div class="t" style="left:1488.9px;top:1322.2px;font-size:22.0px;color:#17202b;font-weight:700;">1</div>
<div class="t" style="left:1504.4px;top:1322.2px;font-size:22.0px;color:#262c36;">of</div>
<div class="t" style="left:1530.8px;top:1322.2px;font-size:22.0px;color:#262c36;">26</div>
<div class="t" style="left:1562.5px;top:1322.2px;font-size:22.0px;color:#262c36;">Pages</div>
<div class="a" style="left:1477.9px;top:1310.2px;width:2.0px;height:24.3px;background:#262c36"></div>
<div class="a" style="left:1647.5px;top:1295.0px;width:41.0px;height:56.0px;border:1px solid #e6e8eb;border-radius:12px;background:#fff;box-shadow:0 2px 8px rgba(0,0,0,0.04)"></div>
<div class="t" style="left:1661.6px;top:1322.2px;font-size:22.0px;color:#2b313b;">1</div>
<svg class="a" style="left:1703.5px;top:1314.3px;" width="12.0" height="18.0" viewBox="0 0 12 18"><path d="M2.5,2 L9,8.5 L2.5,15" fill="none" stroke="#1d2430" stroke-width="2.8" stroke-linecap="round" stroke-linejoin="round"/></svg>
<div class="t" style="left:1753.7px;top:1322.2px;font-size:22.0px;color:#262c36;letter-spacing:-0.31px;">Page Size: 20</div>
<svg class="a" style="left:1904.5px;top:1318.8px;" width="16.0" height="10.0" viewBox="0 0 16 10"><path d="M0.5,0.5 L15,0.5 L7.75,9 Z" fill="#a9b3bd"/></svg>
<div class="a" style="left:295.0px;top:1284.5px;width:51.0px;height:52.0px;background:#fff;border:1px solid #e3e6ea;border-radius:12px;box-shadow:0 2px 8px rgba(0,0,0,0.05)"></div>
<svg class="a" style="left:313.0px;top:1299.0px;" width="16.0" height="24.0" viewBox="0 0 16 24"><path d="M13,2 L3,11.5 L13,21" fill="none" stroke="#111" stroke-width="3" stroke-linecap="round" stroke-linejoin="round"/></svg>
<div class="a" style="left:2778.0px;top:1220.0px;width:72.0px;height:72.0px;background:#0b67b1;border-radius:50%;box-shadow:0 4px 12px rgba(0,0,0,0.18)"></div>
<svg class="a" style="left:2795.0px;top:1236.0px;" width="39.0" height="41.0" viewBox="0 0 39 41"><path d="M5,1 L32,1 Q37,1 37,6 L37,27 Q37,32 32,32 L23,32 L19,38 L15,32 L5,32 Q0.5,32 0.5,27 L0.5,6 Q0.5,1 5,1 Z" fill="#fff"/><path d="M19,7.5 Q20.2,14.8 27.5,16.5 Q20.2,18.2 19,25.5 Q17.8,18.2 10.5,16.5 Q17.8,14.8 19,7.5 Z" fill="#0b67b1" stroke="#0b67b1" stroke-width="1.4" stroke-linejoin="round"/></svg>
<div class="a" style="left:2828.0px;top:1213.0px;width:30.0px;height:30.0px;background:#ee0b0b;border-radius:50%"></div>
<div class="t" style="left:2836.9px;top:1228.1px;font-size:18.5px;color:#fff;">2</div>
<div class="a" style="left:341.0px;top:-25.5px;width:145.0px;height:145.0px;background:rgba(0,0,0,0.4);border-radius:50%"></div>
<div class="a" style="left:379.0px;top:13.0px;width:69.0px;height:69.0px;background:#000;border-radius:50%"></div>
</body></html>
